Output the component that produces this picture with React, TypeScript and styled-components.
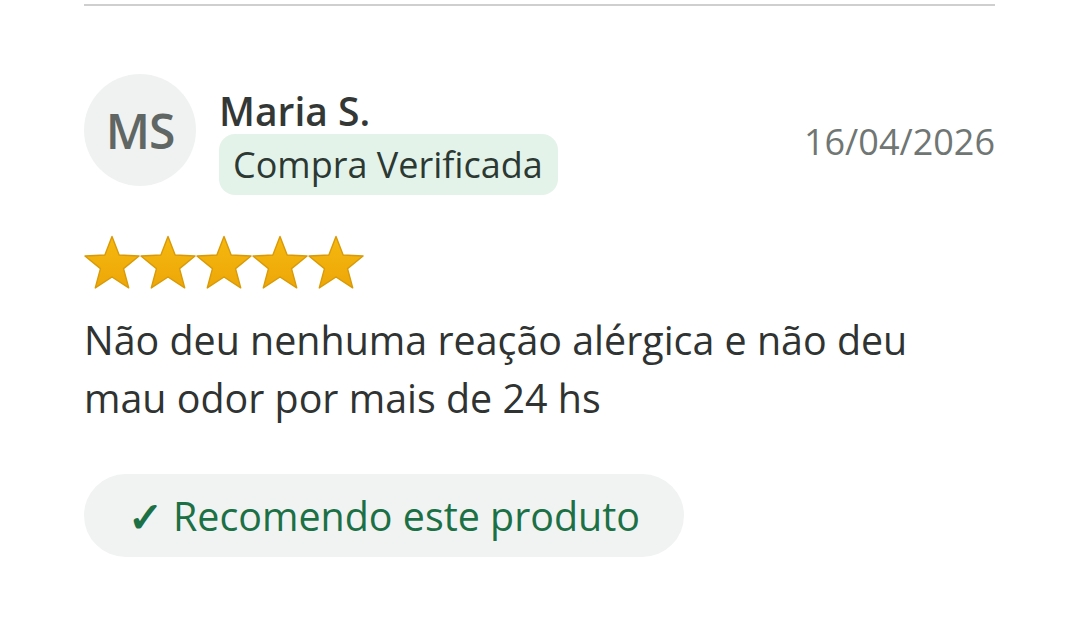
import React from "react";
import styled, { createGlobalStyle } from "styled-components";

const Global = createGlobalStyle`
  html, body { margin: 0; padding: 0; background: #ffffff; }
  body { font-family: "Open Sans", "Noto Sans", sans-serif; }
`;

const Page = styled.div`
  width: 1080px;
  height: 642px;
  box-sizing: border-box;
  padding: 4px 85px 0 84px;
  background: #ffffff;
`;

const Divider = styled.hr`
  margin: 0;
  border: none;
  height: 2px;
  background: #cfcfcf;
`;

const Header = styled.div`
  display: flex;
  align-items: flex-start;
  margin-top: 68px;
`;

const Avatar = styled.div`
  width: 112px;
  height: 112px;
  border-radius: 50%;
  background: #f0f2f1;
  color: #606664;
  font-size: 48px;
  font-weight: 600;
  display: flex;
  align-items: center;
  justify-content: center;
  flex-shrink: 0;
  letter-spacing: -1px;
`;

const Who = styled.div`
  display: flex;
  flex-direction: column;
  align-items: flex-start;
  margin-left: 23px;
  margin-top: 14px;
`;

const Name = styled.div`
  font-size: 39px;
  font-weight: 600;
  color: #333836;
  line-height: 46px;
`;

const Badge = styled.div`
  background: #e4f3ea;
  color: #2c3932;
  font-size: 36px;
  line-height: 61px;
  padding: 0 15px 0 14px;
  border-radius: 16px;
`;

const DateText = styled.div`
  margin-left: auto;
  margin-top: 44px;
  color: #6f7673;
  font-size: 36px;
  line-height: 48px;
`;

const Stars = styled.div`
  display: flex;
  margin-top: 40px;
`;

const Body = styled.p`
  margin: 20px 0 0 0;
  font-size: 39.4px;
  line-height: 58px;
  color: #2f3332;
  max-width: 860px;
`;

const Recommend = styled.div`
  display: inline-flex;
  align-items: center;
  margin-top: 47px;
  height: 83px;
  padding: 0 44px 0 44px;
  border-radius: 42px;
  background: #f1f3f2;
  color: #1c7045;
  font-size: 39.4px;
`;

const Check = styled.span`
  margin-right: 10px;
  font-size: 42px;
  font-weight: 700;
`;

const Star = () => (
  <svg width="56" height="56" viewBox="0 0 24 24">
    <defs>
      <linearGradient id="sg" x1="0" y1="0" x2="0" y2="1">
        <stop offset="0" stopColor="#f6b80f" />
        <stop offset="1" stopColor="#eda708" />
      </linearGradient>
    </defs>
    <path
      d="M12 0.6L15.06 8.59L23.6 9.03L16.95 14.41L19.17 22.67L12 18L4.83 22.67L7.05 14.41L0.4 9.03L8.94 8.59Z"
      fill="url(#sg)"
      stroke="#d99a06"
      strokeWidth="0.6"
      strokeLinejoin="round"
    />
  </svg>
);

export default function App() {
  return (
    <Page>
      <Global />
      <Divider />
      <Header>
        <Avatar>MS</Avatar>
        <Who>
          <Name>Maria S.</Name>
          <Badge>Compra Verificada</Badge>
        </Who>
        <DateText>16/04/2026</DateText>
      </Header>
      <Stars>
        {[0, 1, 2, 3, 4].map((i) => (
          <Star key={i} />
        ))}
      </Stars>
      <Body>Não deu nenhuma reação alérgica e não deu mau odor por mais de 24 hs</Body>
      <Recommend>
        <Check>✓</Check>Recomendo este produto
      </Recommend>
    </Page>
  );
}
